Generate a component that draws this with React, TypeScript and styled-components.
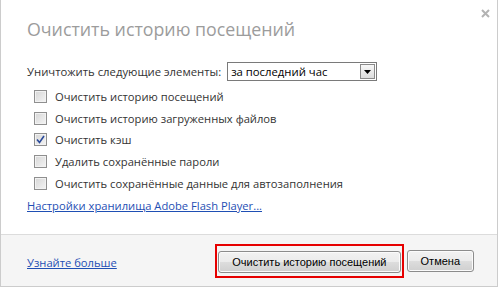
import { FC } from "react";
import styled, { createGlobalStyle } from "styled-components";

const GlobalStyle = createGlobalStyle`
  html, body {
    margin: 0;
    padding: 0;
    background: #ffffff;
  }
  body {
    font-family: "Open Sans", "Noto Sans", sans-serif;
  }
`;

const Dialog = styled.div`
  position: relative;
  box-sizing: border-box;
  width: 498px;
  height: 287px;
  border: 1px solid #cccccc;
  border-top: none;
  display: flex;
  flex-direction: column;
  background: #ffffff;
`;

const Body = styled.div`
  flex: 1;
  padding: 13px 26px 0 26px;
  display: flex;
  flex-direction: column;
`;

const Title = styled.h1`
  margin: 0;
  font-weight: normal;
  font-size: 17.8px;
  line-height: 32px;
  color: #9c9c9c;
`;

const CloseButton = styled.button`
  position: absolute;
  top: 9px;
  right: 7px;
  width: 9px;
  height: 9px;
  padding: 0;
  border: none;
  background: transparent;
  display: flex;
  cursor: pointer;
`;

const SelectRow = styled.div`
  display: flex;
  align-items: center;
  gap: 6px;
  margin-top: 17px;
  font-size: 11.3px;
  color: #333333;
`;

const Select = styled.div`
  box-sizing: border-box;
  width: 150px;
  height: 19px;
  border: 1px solid #7a7a7a;
  display: flex;
  align-items: center;
  justify-content: space-between;
  padding: 0 1px 0 3px;
  font-size: 11.3px;
  color: #000000;
`;

const DropButton = styled.span`
  box-sizing: border-box;
  width: 15px;
  height: 15px;
  border: 1px solid #8a8a8a;
  background: linear-gradient(#f7f7f7, #dcdcdc);
  display: flex;
  align-items: center;
  justify-content: center;
`;

const OptionList = styled.div`
  display: flex;
  flex-direction: column;
  margin-top: 5px;
  padding-left: 7px;
`;

const OptionRow = styled.label`
  display: flex;
  align-items: center;
  gap: 8px;
  height: 21.6px;
  font-size: 11.2px;
  color: #333333;
`;

const Box = styled.span<{ $checked: boolean }>`
  box-sizing: border-box;
  width: 13px;
  height: 13px;
  border: 1px solid #8f8f8f;
  background: linear-gradient(135deg, #d6d6d6, #f4f4f4);
  box-shadow: inset 0 0 0 1px #f2f2f2;
  display: flex;
  align-items: center;
  justify-content: center;
`;

const Link = styled.a`
  color: #1f4fb4;
  text-decoration: underline;
  font-size: 11.2px;
  cursor: pointer;
`;

const FlashRow = styled.div`
  margin-top: 1px;
  line-height: 18px;
`;

const Footer = styled.div`
  box-sizing: border-box;
  height: 52px;
  border-top: 1px solid #dcdcdc;
  background: #f5f5f5;
  display: flex;
  align-items: center;
  padding: 0 23px 0 26px;
`;

const FooterLinkWrap = styled.div`
  flex: 1;
`;

const Actions = styled.div`
  display: flex;
  align-items: center;
  gap: 3px;
`;

const Highlight = styled.div`
  box-sizing: border-box;
  border: 2px solid #e60000;
  padding: 3px 1px;
`;

const Button = styled.button<{ $minWidth?: number }>`
  box-sizing: border-box;
  height: 22px;
  min-width: ${({ $minWidth }) => ($minWidth ? `${$minWidth}px` : "0")};
  padding: 0 13px;
  border: 1px solid #8c8c8c;
  border-radius: 3px;
  background: linear-gradient(#f2f2f2 0%, #ebebeb 50%, #dddddd 51%, #cfcfcf 100%);
  box-shadow: inset 0 0 0 1px #fbfbfb;
  font-family: "Liberation Sans", Arial, sans-serif;
  font-size: 11px;
  color: #000000;
  cursor: pointer;
`;

const options = [
  { label: "Очистить историю посещений", checked: false },
  { label: "Очистить историю загруженных файлов", checked: false },
  { label: "Очистить кэш", checked: true },
  { label: "Удалить сохранённые пароли", checked: false },
  { label: "Очистить сохранённые данные для автозаполнения", checked: false },
];

const Checkbox: FC<{ checked: boolean }> = ({ checked }) => (
  <Box $checked={checked}>
    {checked && (
      <svg width="9" height="9" viewBox="0 0 9 9">
        <path d="M1 4.5 L3.5 7.5 L8 1" fill="none" stroke="#2a4a9a" strokeWidth="1.6" />
      </svg>
    )}
  </Box>
);

const App: FC = () => {
  return (
    <>
      <GlobalStyle />
      <Dialog>
        <CloseButton aria-label="Закрыть">
          <svg width="9" height="9" viewBox="0 0 9 9">
            <path d="M1 1 L8 8 M8 1 L1 8" stroke="#b3b3b3" strokeWidth="2" />
          </svg>
        </CloseButton>
        <Body>
          <Title>Очистить историю посещений</Title>
          <SelectRow>
            <span>Уничтожить следующие элементы:</span>
            <Select>
              <span>за последний час</span>
              <DropButton>
                <svg width="7" height="4" viewBox="0 0 7 4">
                  <path d="M0 0 H7 L3.5 4 Z" fill="#000" />
                </svg>
              </DropButton>
            </Select>
          </SelectRow>
          <OptionList>
            {options.map((o) => (
              <OptionRow key={o.label}>
                <Checkbox checked={o.checked} />
                <span>{o.label}</span>
              </OptionRow>
            ))}
          </OptionList>
          <FlashRow>
            <Link>Настройки хранилища Adobe Flash Player...</Link>
          </FlashRow>
        </Body>
        <Footer>
          <FooterLinkWrap>
            <Link>Узнайте больше</Link>
          </FooterLinkWrap>
          <Actions>
            <Highlight>
              <Button>Очистить историю посещений</Button>
            </Highlight>
            <Button $minWidth={66}>Отмена</Button>
          </Actions>
        </Footer>
      </Dialog>
    </>
  );
};

export default App;
